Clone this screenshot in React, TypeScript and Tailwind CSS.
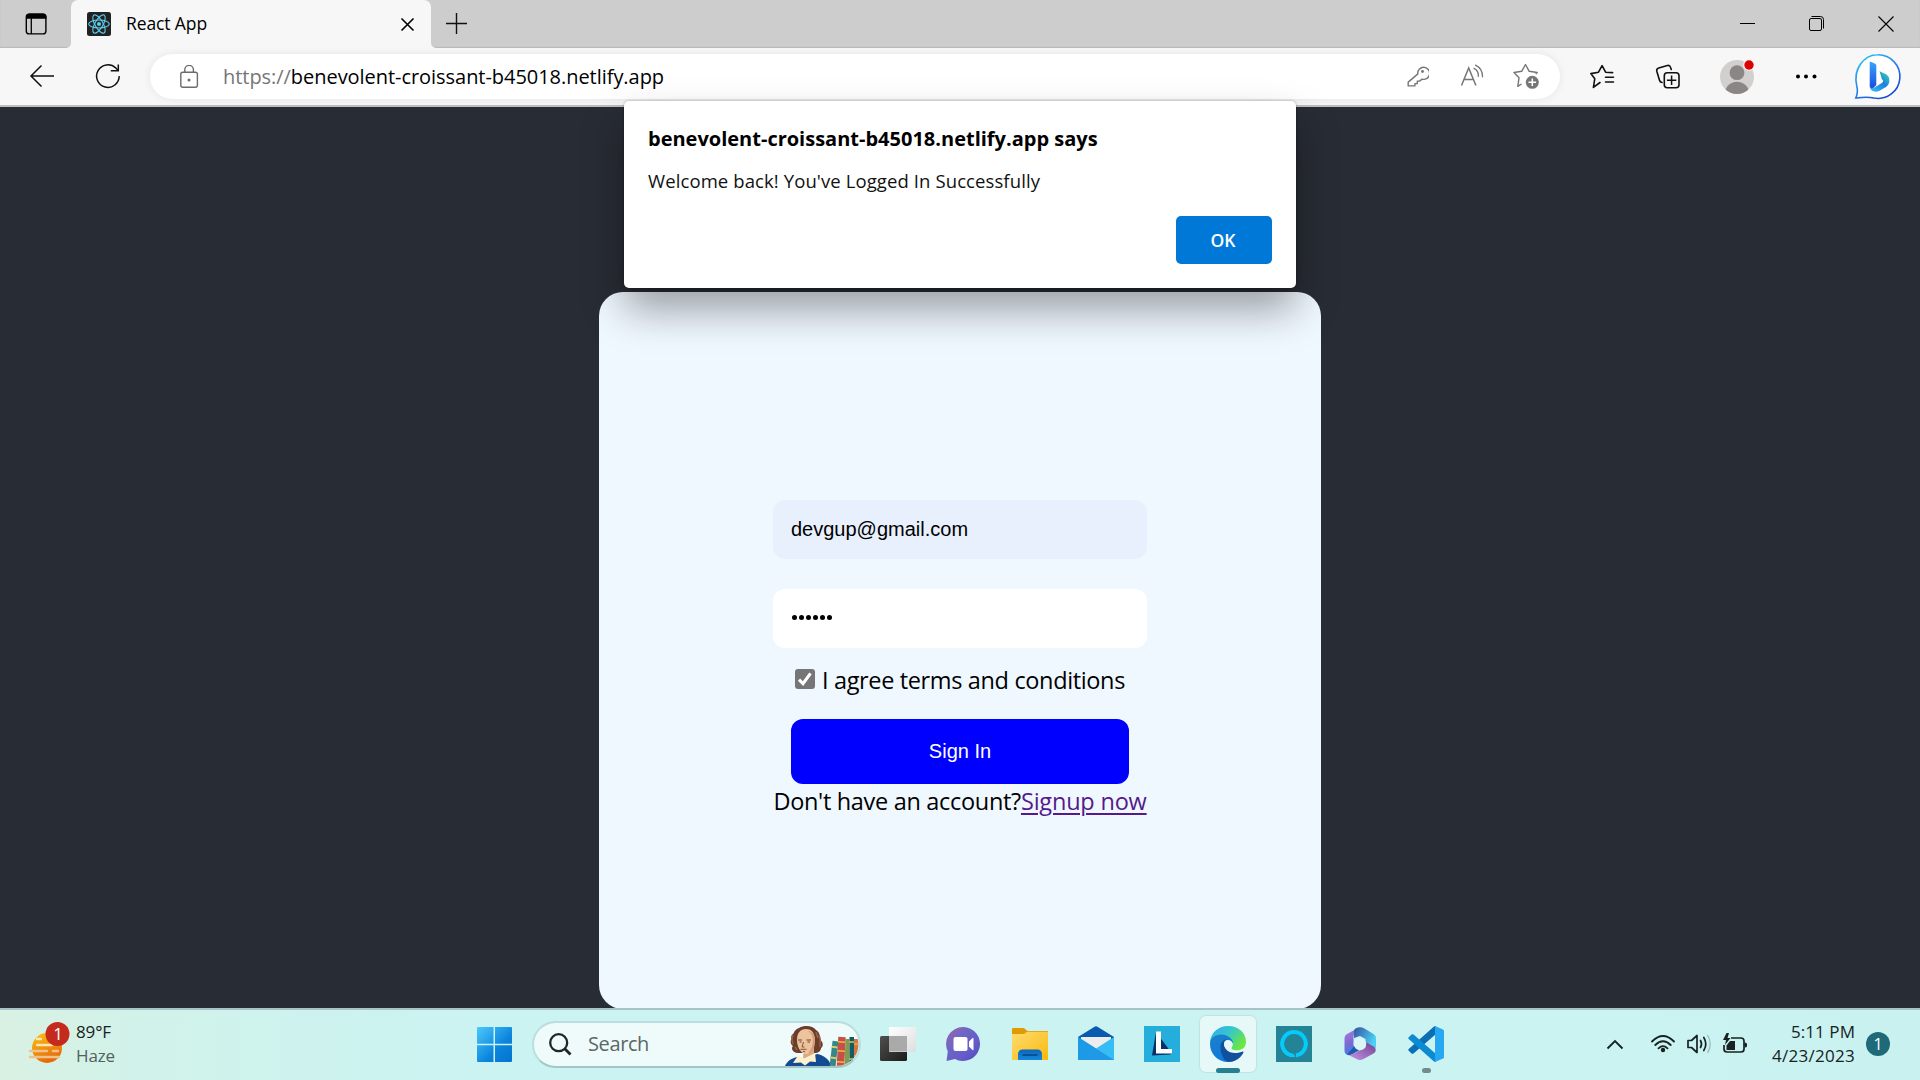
import React from "react";

type BoxProps = { b: string; className?: string; children: React.ReactNode };

/* Icon drawn on a window-sized coordinate grid; b is "x y width height". */
function Ico({ b, className = "", children }: BoxProps) {
  const [, , w, h] = b.split(" ");
  return (
    <svg viewBox={b} width={w} height={h} fill="none" className={"block shrink-0 " + className}>
      {children}
    </svg>
  );
}

function TabStrip() {
  return (
    <div className="flex h-12 shrink-0 bg-[#cdcdcd] shadow-[inset_0_-1px_1px_#b8b8b8]">
      <div className="flex w-[71px] items-center pl-[25px]">
        <Ico b="25 13 22 22">
          <rect x="26.3" y="14.3" width="19.6" height="19.6" rx="3" stroke="#000" strokeWidth="1.4" />
          <path d="M26 18.7V17a3.5 3.5 0 0 1 3.500-3.500h13.500a3.500 3.500 0 0 1 3.500 3.500v1.700z" fill="#000" />
          <path d="M31.300 18v16" stroke="#000" strokeWidth="1.300" />
        </Ico>
      </div>
      <div className="relative flex w-[360px] items-center rounded-t-[7px] bg-[#f7f7f7] px-4">
        <svg className="absolute -left-[5px] bottom-0" width="5" height="5"><path d="M0 5a5 5 0 0 0 5-5v5z" fill="#f7f7f7" /></svg>
        <svg className="absolute -right-[5px] bottom-0" width="5" height="5"><path d="M5 5a5 5 0 0 1-5-5v5z" fill="#f7f7f7" /></svg>
        <Ico b="0 0 24 24">
          <rect width="24" height="24" rx="2.500" fill="#222" />
          <g stroke="#5ccfee" strokeWidth="1.100">
            <ellipse cx="12" cy="12" rx="10.300" ry="4" />
            <ellipse cx="12" cy="12" rx="10.300" ry="4" transform="rotate(60 12 12)" />
            <ellipse cx="12" cy="12" rx="10.300" ry="4" transform="rotate(120 12 12)" />
          </g>
          <circle cx="12" cy="12" r="2" fill="#5ccfee" />
        </Ico>
        <span className="-mt-px ml-[15px] whitespace-nowrap text-[17.5px] tracking-[-0.11px] text-black">React App</span>
        <Ico b="400 17 15 15" className="ml-auto">
          <path d="M401.500 18.500l12 12m0-12l-12 12" stroke="#000" strokeWidth="1.600" />
        </Ico>
      </div>
      <div className="flex items-center pl-[15px]">
        <Ico b="446 13 22 22"><path d="M446 23.500h21M456.500 13v21" stroke="#111" strokeWidth="1.400" /></Ico>
      </div>
      <div className="ml-auto mr-[26px] flex items-center gap-[53px]">
        <Ico b="1728 16 16 16"><path d="M1728 23.500h15" stroke="#000" /></Ico>
        <Ico b="1795 16 16 16">
          <rect x="1795.500" y="18.500" width="12" height="12" rx="1.500" stroke="#000" />
          <path d="M1797.500 16.500h9a3 3 0 0 1 3 3v9" stroke="#000" />
        </Ico>
        <Ico b="1861 16 16 16"><path d="M1861.500 16.500l15 15m0-15l-15 15" stroke="#000" strokeWidth="1.100" /></Ico>
      </div>
    </div>
  );
}

function Toolbar() {
  return (
    <div className="flex h-[59px] shrink-0 items-center border-b-2 border-[#bebebe] bg-[#f7f7f7] pl-[29px]">
      <Ico b="29 64 26 25">
        <path d="M54 76H31M41.500 65.500L31 76l10.500 10.500" stroke="#111" strokeWidth="1.500" />
      </Ico>
      <Ico b="95 64 26 25" className="ml-10">
        <path d="M119.200 76a11.300 11.300 0 1 1-3.400-8l2.500 2.600" stroke="#111" strokeWidth="1.500" />
        <path d="M118.300 64.500v6.300h-7.500" stroke="#111" strokeWidth="1.500" />
      </Ico>
      <div className="ml-[29px] flex h-[45px] w-[1410px] items-center rounded-full bg-white pl-[29px] shadow-[0_0_8px_rgba(0,0,0,0.08)]">
        <Ico b="179 64 20 24">
          <rect x="180.800" y="71.300" width="16.600" height="15" rx="2" stroke="#6c6c6c" strokeWidth="1.400" />
          <path d="M184.800 71v-2.300a4.300 4.300 0 0 1 8.600 0V71" stroke="#6c6c6c" strokeWidth="1.400" />
          <circle cx="189" cy="79" r="1.500" fill="#6c6c6c" />
        </Ico>
        <span className="ml-[24px] whitespace-nowrap text-[20px] tracking-[-0.045px] text-black">
          <span className="text-[#767676]">https://</span>benevolent-croissant-b45018.netlify.app
        </span>
        <div className="ml-auto mr-5 flex items-center text-[#767676]">
          <Ico b="1407 64 22 26">
            <path d="M1418.300 74.500a6 6 0 1 1 4.400 5.200l-2.500 2h-2.300v2.500h-2.400v2.300h-6.700v-3.800l9.700-8.200z" transform="translate(-.6 -.6)" stroke="currentColor" strokeWidth="1.400" strokeLinejoin="round" />
            <circle cx="1422.500" cy="71.500" r="1.400" fill="currentColor" />
          </Ico>
          <Ico b="1460 64 26 26" className="ml-[31px]">
            <path d="M1461.500 85.500L1468.700 68l7.200 17.500M1464 79.500h9.500" stroke="currentColor" strokeWidth="1.500" />
            <path d="M1474 68.300a8 8 0 0 1 4.300 8M1475.500 65.200a12.500 12.500 0 0 1 7 11.600" stroke="currentColor" strokeWidth="1.300" strokeLinecap="round" />
          </Ico>
          <Ico b="1512 64 28 27" className="ml-[26px]">
            <path d="M1521.500 85l-3.700 2.300 1.200-8.500-5-5.300 7.700-1.200 3.800-6.800 3.700 6.800 8 1.200-1.500 1.500" stroke="currentColor" strokeWidth="1.400" strokeLinejoin="round" />
            <circle cx="1532.300" cy="83.300" r="6.500" fill="currentColor" />
            <path d="M1528.500 83.300h7.600M1532.300 79.500v7.600" stroke="#fff" strokeWidth="1.500" />
          </Ico>
        </div>
      </div>
      <Ico b="1589 63 27 27" className="ml-[29px]">
        <path d="M1600 82.500l-6.600 4.900 1.400-8.700-4-5.100 7.700-1.400 3.600-6.600 3.500 6.600 7 .4" stroke="#111" strokeWidth="1.600" strokeLinejoin="round" strokeLinecap="round" />
        <path d="M1605.500 77.300h8M1605.500 82h8" stroke="#111" strokeWidth="1.600" strokeLinecap="round" />
      </Ico>
      <Ico b="1655 63 26 27" className="ml-[39px]">
        <path d="M1662 82.500c-1.500-.3-2.200-1-2.500-2.300l-2.700-9c-.4-1.600.3-2.700 1.900-3.200l8.700-2.500c1.600-.4 2.700.3 3.200 1.900l.7 2" stroke="#111" strokeWidth="1.600" strokeLinecap="round" />
        <rect x="1664.300" y="72.800" width="14.700" height="15" rx="3" stroke="#111" strokeWidth="1.600" />
        <path d="M1666.900 80.300h9.400M1671.600 75.600V85" stroke="#111" strokeWidth="1.500" />
      </Ico>
      <Ico b="1719 58 37 37" className="ml-[38px]">
        <clipPath id="avatar"><circle cx="1737" cy="77" r="17" /></clipPath>
        <g clipPath="url(#avatar)">
          <rect x="1719" y="59" width="36" height="36" fill="#d2d0ce" />
          <circle cx="1737" cy="72.700" r="7.400" fill="#8a8683" />
          <circle cx="1737" cy="94" r="12.300" fill="#8a8683" />
        </g>
        <circle cx="1749" cy="65" r="5.800" fill="#f7f7f7" />
        <circle cx="1749" cy="65" r="4.700" fill="#e00000" />
      </Ico>
      <Ico b="1795 72 24 9" className="ml-[39px]">
        <g fill="#000"><circle cx="1798" cy="76.500" r="2" /><circle cx="1806" cy="76.500" r="2" /><circle cx="1814.500" cy="76.500" r="2" /></g>
      </Ico>
      <Ico b="1854 52 50 50" className="ml-[34px]">
        <defs>
          <linearGradient id="bubble" x1="0" y1="0" x2=".7" y2="1"><stop stopColor="#1fd0f5" /><stop offset=".5" stopColor="#2a86ee" /><stop offset="1" stopColor="#174ad0" /></linearGradient>
          <linearGradient id="stem" x1="0" y1="0" x2="0" y2="1"><stop stopColor="#37a6fb" /><stop offset="1" stopColor="#1b4bdc" /></linearGradient>
          <linearGradient id="bowl" x1="1" y1="0" x2="0" y2="1"><stop stopColor="#3fe0a8" /><stop offset=".45" stopColor="#1c7fe0" /><stop offset="1" stopColor="#35c4f7" /></linearGradient>
        </defs>
        <path d="M1856.500 98.500c2.500-4 2-9 1.200-12.500a22 22 0 1 1 17 12.200c-6-1.800-12-.8-18.200.3z" transform="translate(.6 .5)" fill="#c4cdd8" />
        <path d="M1856.800 98c2.200-4.500 1.900-8.500.9-12.500-3.500-16 7-30.700 20.800-30.700a21.800 21.800 0 1 1-3.500 43.200c-6-1.300-12-.8-18.200 0z" fill="#fff" stroke="url(#bubble)" strokeWidth="1.600" />
        <path d="M1880.500 71.200l7 3.200c4 2.500 4 9.500-.5 12.700l-6.500 3.700c-4.500 2-9 .5-9.800-3.500l3.500 1 9-5.500c1.500-1.200 1-2.600-.2-3.200z" fill="url(#bowl)" />
        <path d="M1870.700 62.500q0-1.200 1.200-.7l4.300 2a2 2 0 0 1 1.100 1.800v19.500l-2.400 2.400c-1.200 1-3.700 1-4.200-1z" fill="url(#stem)" />
      </Ico>
    </div>
  );
}

function AlertDialog() {
  return (
    <div className="absolute left-1/2 top-[101px] flex h-[187px] w-[672px] -translate-x-1/2 flex-col rounded-[5px] bg-white px-6 pt-[23px] shadow-[0_0_3px_rgba(0,0,0,0.28),0_22px_40px_rgba(0,0,0,0.36)]">
      <h2 className="flex h-[30px] items-center text-[20px] font-bold text-black">
        <span className="whitespace-nowrap">benevolent-croissant-b45018.netlify.app says</span>
      </h2>
      <p className="mt-4 h-[22px] overflow-hidden text-[18.5px] leading-[22px] tracking-[0.1px] text-[#111]">
        <span className="whitespace-nowrap">Welcome back! You've Logged In Successfully</span>
      </p>
      <button className="mt-6 flex h-12 w-24 items-center justify-center self-end rounded-[5px] bg-[#0078d7] pr-0.5 text-[17.5px] font-semibold text-white">
        OK
      </button>
    </div>
  );
}

function LoginCard() {
  return (
    <main className="flex min-h-0 grow justify-center overflow-hidden bg-[#282c34] pt-[185px]">
      <form className="flex h-[717px] w-[722px] flex-col items-center rounded-3xl bg-[#f0f8ff] pt-[208px]">
        <div className="flex h-[59px] w-[374px] items-center rounded-xl bg-[#e8f0fe] px-[18px] pb-[2px] font-['Liberation_Sans',Arial,sans-serif] text-[20px] text-black">devgup@gmail.com</div>
        <div className="mt-[30px] flex h-[59px] w-[374px] items-center gap-[2px] rounded-xl bg-white px-[19px]">
          {[0, 1, 2, 3, 4, 5].map((i) => (
            <i key={i} className="mb-0.5 size-[5px] rounded-full bg-black" />
          ))}
        </div>
        <label className="mt-4 flex h-8 w-[330px] items-center text-[23.5px] text-black">
          <Ico b="0 0 20 20" className="-mt-0.5">
            <rect width="20" height="20" rx="3" fill="#767676" />
            <path d="M4 10.700l4 4L15.500 4.300" stroke="#fff" strokeWidth="3.100" />
          </Ico>
          <span className="ml-[7px] mt-0.5 whitespace-nowrap tracking-[-0.355px]">I agree terms and conditions</span>
        </label>
        <button type="button" className="mt-[23px] flex h-[65px] w-[338px] items-center justify-center rounded-xl bg-[#0000ff] pb-[2px] font-['Liberation_Sans',Arial,sans-serif] text-[20px] text-white">Sign In</button>
        <p className="flex h-9 items-center whitespace-nowrap text-[23.5px] text-black">
          <span className="tracking-[-0.31px]">Don't have an account?</span>
          <a className="tracking-[-0.2px] text-[#551a8b] underline decoration-[2px] underline-offset-[3px]">Signup now</a>
        </p>
      </form>
    </main>
  );
}

function Cell({ active, mark, children }: { active?: boolean; mark?: string; children: React.ReactNode }) {
  return (
    <div className="flex w-[66px] justify-center">
      <div className={"relative flex h-14 w-14 items-center justify-center rounded-md " + (active ? "bg-[#e6f8f8] shadow-[0_0_1px_1px_#bfe3e4]" : "")}>
        {children}
        {mark && <span className={"absolute -bottom-px h-[5px] rounded-full " + mark} />}
      </div>
    </div>
  );
}

function Taskbar() {
  return (
    <footer className="flex h-[72px] shrink-0 border-t-2 border-[#a8c3c5] bg-[linear-gradient(90deg,#d9f1e3_0,#d0f2ea_8%,#cbf3f2_25%,#cbf3f2_85%,#c8f1f0_100%)] pb-0.5">
      <div className="flex w-[477px] items-center pl-7 text-[17px] leading-6 tracking-[-0.12px]">
        <Ico b="28 1016 44 46">
          <defs>
            <linearGradient id="sun" x1="0" y1="0" x2=".4" y2="1"><stop stopColor="#fbc314" /><stop offset="1" stopColor="#e86a0a" /></linearGradient>
          </defs>
          <circle cx="47" cy="1043" r="15" fill="url(#sun)" />
          <g strokeLinecap="round" strokeWidth="2.400">
            <path d="M37 1034h4M37 1040h15" stroke="#fde6b4" />
            <path d="M30 1046h17M53 1046h5M30 1052h29" stroke="#ecc48b" />
          </g>
          <circle cx="57.500" cy="1029" r="12" fill="#c42b1c" />
          <text x="58" y="1035" textAnchor="middle" fill="#fff" fontSize="17" fontFamily="Open Sans, sans-serif">1</text>
        </Ico>
        <div className="ml-1 flex flex-col whitespace-nowrap">
          <span className="text-[#1a2323]">89°F</span>
          <span className="text-[#52605f]">Haze</span>
        </div>
      </div>
      <div className="flex items-center">
        <Ico b="0 0 35 35" className="mt-px">
          <defs><linearGradient id="win" x1="0" y1="0" x2="35" y2="35" gradientUnits="userSpaceOnUse"><stop stopColor="#4cc9fc" /><stop offset=".6" stopColor="#0c85dc" /><stop offset="1" stopColor="#0473cd" /></linearGradient></defs>
          <path d="M1 0h15.500v16.700H0V1a1 1 0 0 1 1-1zM18 0h16a1 1 0 0 1 1 1v15.700H18zM0 18.200h16.500V35H1a1 1 0 0 1-1-1zM18 18.200h17V34a1 1 0 0 1-1 1H18z" fill="url(#win)" />
        </Ico>
        <div className="ml-5 flex h-[47px] w-[329px] items-center rounded-full border-2 border-[#b9dedd] border-b-[#a4c6c6] bg-[#effbfb] pl-[15px]">
          <Ico b="550 1033 23 23">
            <circle cx="559.700" cy="1042.700" r="8.500" stroke="#1f2626" strokeWidth="2.300" />
            <path d="M566 1049l5.500 5.500" stroke="#1f2626" strokeWidth="2.800" />
          </Ico>
          <span className="ml-4 whitespace-nowrap text-[20px] tracking-[-0.39px] text-[#5b6666]">Search</span>
          <Ico b="784 1022 76 43" className="-mr-px ml-auto">
            <clipPath id="pill"><path d="M784 1022h53a21.500 21.500 0 0 1 0 43h-53z" /></clipPath>
            <path d="M799 1027c5-3 14-2.500 17 2 4 2 4 7 4.500 10 3.500 3 2.500 7 .5 8 0 3-3 5-6 5h-18c-5-1-6-5-4-7-3-2-2.500-6-1.500-7-1-3 1-5 2-5.500 1-3 3-4.500 5.500-5.500z" fill="#6b3d2b" />
            <path d="M793 1034c-2 4-1 6 0 9M819 1034c2 4 1 8 1 12M795 1046l2 3M816 1031l2 6" stroke="#9a6246" strokeWidth="1.500" />
            <path d="M804 1047h10v10h-11z" fill="#dca984" />
            <path d="M797 1039c0-7 3-11 9-11s9 4 8.500 12c0 8-4 13-8 13-5 0-9.500-6-9.500-14z" fill="#ecc39d" />
            <path d="M808 1030c7 4 6 16 0 22.500 4 0 7-5 7-13 .4-5-2-9-7-9.500z" fill="#d69f7b" />
            <path d="M798 1039h4M806.500 1039h4.500M799.500 1041h2M807.500 1041h2.500" stroke="#71462f" strokeWidth="1.100" />
            <path d="M803.500 1041l-1.500 5h2.500M800.500 1048.300h6M803 1050.500h2" stroke="#8a523b" />
            <path d="M785 1065c2-5 7-8 12-9l7 2 13-5c7 1 13 6 14 12z" fill="#124b93" />
            <path d="M793 1062l5-7.500 6 3 11-5.500 1 9-6-.5-5 4-4-3z" fill="#fff1cb" />
            <g clipPath="url(#pill)">
              <g transform="rotate(7 834 1053)"><rect x="831" y="1040" width="6" height="25" fill="#35888a" /><path d="M831 1046h6M831 1057h6" stroke="#d6cd6d" strokeWidth="2" /></g>
              <g transform="rotate(3 841 1050)"><rect x="837.500" y="1036" width="7.500" height="29" fill="#c75044" />
              <path d="M837.500 1041h7.500M837.500 1050h7.500M837.500 1061h7.500" stroke="#edb84b" strokeWidth="1.500" /></g>
              <path d="M845.500 1038h4v27h-5z" fill="#7e9b52" />
              <path d="M849.500 1036h4.500v29h-4.500z" fill="#145c64" />
              <path d="M849 1041h5M849 1058h5" stroke="#dfbd54" strokeWidth="1.500" />
              <path d="M854 1038h6v27h-6z" fill="#ce7842" />
              <path d="M854 1043h6M854 1055h6" stroke="#efc06b" />
            </g>
          </Ico>
        </div>
      </div>
      <div className="ml-1 flex items-center">
        <Cell>
          <Ico b="880 1026 36 36">
            <defs>
              <linearGradient id="tvd" x1="0" y1="0" x2="1" y2="1"><stop stopColor="#50504f" /><stop offset="1" stopColor="#1b1b1b" /></linearGradient>
              <linearGradient id="tvl" x1="0" y1="0" x2="1" y2="1"><stop stopColor="#fff" /><stop offset="1" stopColor="#dedede" /></linearGradient>
            </defs>
            <rect x="880" y="1036" width="27" height="25" rx="1.500" fill="url(#tvd)" />
            <rect x="889" y="1027" width="27" height="25" rx="1" fill="url(#tvl)" />
            <path d="M889 1036h18v15.500h-18z" fill="#aaa" />
          </Ico>
        </Cell>
        <Cell>
          <Ico b="946 1026 36 36">
            <defs><linearGradient id="chat" x1="0" y1="0" x2="1" y2=".9"><stop stopColor="#a65fa8" /><stop offset=".35" stopColor="#6e67c4" /><stop offset=".7" stopColor="#665bc9" /><stop offset="1" stopColor="#5050bd" /></linearGradient></defs>
            <path d="M963 1027a17 17 0 1 1-8 32l-8.500 2 1.300-9.500A17 17 0 0 1 963 1027z" fill="url(#chat)" />
            <rect x="953.500" y="1037" width="14" height="14" rx="2" fill="#fff" />
            <path d="M969 1041.500l3.500-3.500q1-.6 1 .8v10.500q0 1.400-1 .7l-3.500-3.500z" fill="#fff" />
          </Ico>
        </Cell>
        <Cell>
          <Ico b="1012 1026 36 36">
            <defs><linearGradient id="fold" x1="0" y1="0" x2="1" y2="1"><stop stopColor="#ffdc70" /><stop offset="1" stopColor="#f9b90d" /></linearGradient><linearGradient id="fb" x1="0" y1="0" x2="0" y2="1"><stop stopColor="#0c66b8" /><stop offset="1" stopColor="#1488dd" /></linearGradient></defs>
            <path d="M1012 1029a1 1 0 0 1 1-1h10c2.500 0 3 3 5 3h19a1 1 0 0 1 1 1v5h-36z" fill="#de9c02" />
            <path d="M1012 1034h11c2 0 3-2.300 5-2.300h19a1 1 0 0 1 1 1V1060h-36z" fill="url(#fold)" />
            <path d="M1018 1060v-6a4.500 4.500 0 0 1 4.500-4.500h15a4.500 4.500 0 0 1 4.500 4.500v6z" fill="url(#fb)" />
            <path d="M1022.500 1055h15" stroke="#06478a" strokeWidth="1.600" />
          </Ico>
        </Cell>
        <Cell>
          <Ico b="1078 1026 36 36">
            <defs><linearGradient id="mail" x1="0" y1="0" x2="1" y2="1"><stop stopColor="#1a9be4" /><stop offset="1" stopColor="#2198e8" /></linearGradient></defs>
            <path d="M1078 1037l17-10.500q1-.6 2 0l17 10.500v6h-36z" fill="#0a5aaf" />
            <path d="M1081 1037h30v6l-15 11-15-11z" fill="#ededee" />
            <path d="M1078 1037l18 11.500 18-11.500v23h-36z" fill="#37bdf5" />
            <path d="M1078 1037l36 23h-36z" fill="url(#mail)" />
          </Ico>
        </Cell>
        <Cell>
          <Ico b="1144 1026 36 36">
            <path d="M1144 1026h36v36h-36z" fill="#25addc" />
            <path d="M1156 1032l-4 23.500 18-1 2-1z" fill="#0c2f66" />
            <path d="M1156 1031.500h5V1049h11v4.500h-16z" fill="#fff" />
          </Ico>
        </Cell>
        <Cell active mark="w-6 bg-[#26808f]">
          <Ico b="0 0 36 36">
            <defs>
              <linearGradient id="e1" x1="0" y1="0" x2="1" y2=".6"><stop stopColor="#2fa9ef" /><stop offset=".5" stopColor="#36c6cf" /><stop offset="1" stopColor="#6be83d" /></linearGradient>
              <linearGradient id="e2" x1="0" y1="0" x2=".5" y2="1"><stop stopColor="#1e7fc8" /><stop offset="1" stopColor="#0b7ade" /></linearGradient>
            </defs>
            <path d="M0 16C1 6 9 0 18 0c11 0 18 7.500 18 15.500 0 6-4 8.800-9 8.800-4 0-6.500-1.300-5-3.300 2-3 .5-7-5-8z" fill="url(#e1)" />
            <path d="M0 18C0 12 5 8.500 11.500 8.500c7 0 12 5.500 11.500 8.500-3-4-9-3-9.500 2C13 26 20 34 27 33c-2.500 2-6 3-9 3C8 36 0 28 0 18z" fill="url(#e2)" />
            <path d="M10.500 21c0-5 3.500-7.500 6-7.500-4.500 4-2.500 13 8.500 13.500 3 0 6-1.200 7.500-1.600.8 0 1.200.6.800 1.600C30 33 24 36 18.500 36c-4.500-1-8-8-8-15z" fill="#10509c" />
            <circle cx="18" cy="18" r="4" fill="#e6f8f8" />
          </Ico>
        </Cell>
        <Cell>
          <Ico b="0 0 36 36">
            <path d="M0 0h36v36H0z" fill="#258397" />
            <path d="M16 29.500A11.800 11.800 0 1 1 20 29.500" stroke="#05cbfb" strokeWidth="4" />
            <path d="M15 31l2-4 2.500 4z" fill="#05cbfb" />
          </Ico>
        </Cell>
        <Cell>
          <Ico b="1342 1026 36 36">
            <defs>
              <linearGradient id="m1" x1="0" y1="0" x2=".3" y2="1"><stop stopColor="#b57bd9" /><stop offset=".6" stopColor="#7a6bd5" /><stop offset="1" stopColor="#3f7fe0" /></linearGradient>
              <linearGradient id="m2" x1="0" y1="0" x2="1" y2=".5"><stop stopColor="#35519f" /><stop offset="1" stopColor="#4ad2f6" /></linearGradient>
              <linearGradient id="m3" x1="1" y1="0" x2="0" y2="1"><stop stopColor="#6d428e" /><stop offset="1" stopColor="#c995e8" /></linearGradient>
            </defs>
            <path d="M1358 1028l-11 6q-2.500 1.500-2.500 4v13q0 2.500 2 3.500 3 1.500 6-.5l7-4-6-4.500v-10z" fill="url(#m1)" />
            <path d="M1354 1038v-7q0-1.500 1.500-2.500 4.500-2.500 9 0l9 5.500q2.500 1.500 2.500 4v10l-10.500-6v-3l-5.500-3z" fill="url(#m2)" />
            <path d="M1366 1042l8.500 5q2 2 1 4.500-.5 1.200-2 2l-10 5.500q-3.500 2-7 0l-9-4.500q3 1 6-1l12-6z" fill="url(#m3)" />
            <path d="M1347 1054.500q3 1 6-1l7-4-6-3z" fill="#1b5ba9" />
            <circle cx="1360" cy="1044" r="6.200" fill="#d9f5f5" />
          </Ico>
        </Cell>
        <Cell mark="w-[9px] bg-[#748a8c]">
          <Ico b="1408 1026 36 36">
            <path d="M1408.500 1050.500l3 3q1 .7 2 0L1436 1034v-8l-2 .5-25.300 22.500q-.8.8-.2 1.500z" fill="#0a6fb5" />
            <path d="M1408.500 1037.500l3-3q1-.7 2 0L1436 1054v8l-2-.5-25.300-22.500q-.8-.8-.2-1.500z" fill="#0c8ad2" />
            <path d="M1435 1026l8 3.500q1 .5 1 1.500v26q0 1-1 1.500l-8 3.500z" fill="#27a8f3" />
          </Ico>
        </Cell>
      </div>
      <div className="ml-auto mr-[30px] flex items-center text-[#182222]">
        <Ico b="1606 1036 18 14"><path d="M1607.500 1047.500l7.500-7.500 7.500 7.500" stroke="currentColor" strokeWidth="1.900" /></Ico>
        <Ico b="1650 1033 26 22" className="ml-[26px]">
          <g stroke="currentColor" strokeWidth="1.800" strokeLinecap="round">
            <path d="M1652 1041.500q11-11 22 0M1655.300 1045q7.700-7.600 15.400 0M1658.500 1048.300q4.500-4.300 9 0" />
          </g>
          <circle cx="1663" cy="1050" r="2.200" fill="currentColor" />
        </Ico>
        <Ico b="1686 1032 26 24" className="ml-[10px]">
          <path d="M1688 1040.500h3.500l5.500-5v17l-5.500-5h-3.500z" stroke="currentColor" strokeWidth="1.700" strokeLinejoin="round" />
          <path d="M1700.500 1040.500q2 3.500 0 7M1703.800 1037.500q4 6.500 0 13" stroke="currentColor" strokeWidth="1.700" strokeLinecap="round" />
          <path d="M1707.500 1035q5.500 9 0 18" stroke="#9dbcbc" strokeWidth="1.300" />
        </Ico>
        <Ico b="1722 1031 26 24" className="ml-[10px]">
          <path d="M1731 1037h10q3 0 3 3v8q0 3-3 3h-14q-3 0-3-3v-4" stroke="currentColor" strokeWidth="1.700" />
          <path d="M1744.500 1041.500q2.500 0 2.500 1.500v2q0 1.500-2.500 1.500z" fill="currentColor" />
          <path d="M1730 1040h5v9h-8.500v-4.500z" fill="currentColor" />
          <path d="M1726.500 1032l-3.500 7h3l-1 5 5.500-7h-3l1.500-5z" fill="currentColor" />
        </Ico>
        <div className="ml-6 flex w-[83px] flex-col items-end whitespace-nowrap text-[17px] leading-6">
          <span className="tracking-[0.06px]">5:11 PM</span>
          <span className="tracking-[0.28px]">4/23/2023</span>
        </div>
        <div className="ml-[11px] flex size-6 items-center justify-center rounded-full bg-[#1f6a79] text-[16px] text-white">1</div>
      </div>
    </footer>
  );
}

export default function App() {
  return (
    <div className="relative flex h-[1080px] w-[1920px] flex-col overflow-hidden font-['Open_Sans','Noto_Sans',sans-serif]">
      <TabStrip />
      <Toolbar />
      <LoginCard />
      <Taskbar />
      <AlertDialog />
    </div>
  );
}
